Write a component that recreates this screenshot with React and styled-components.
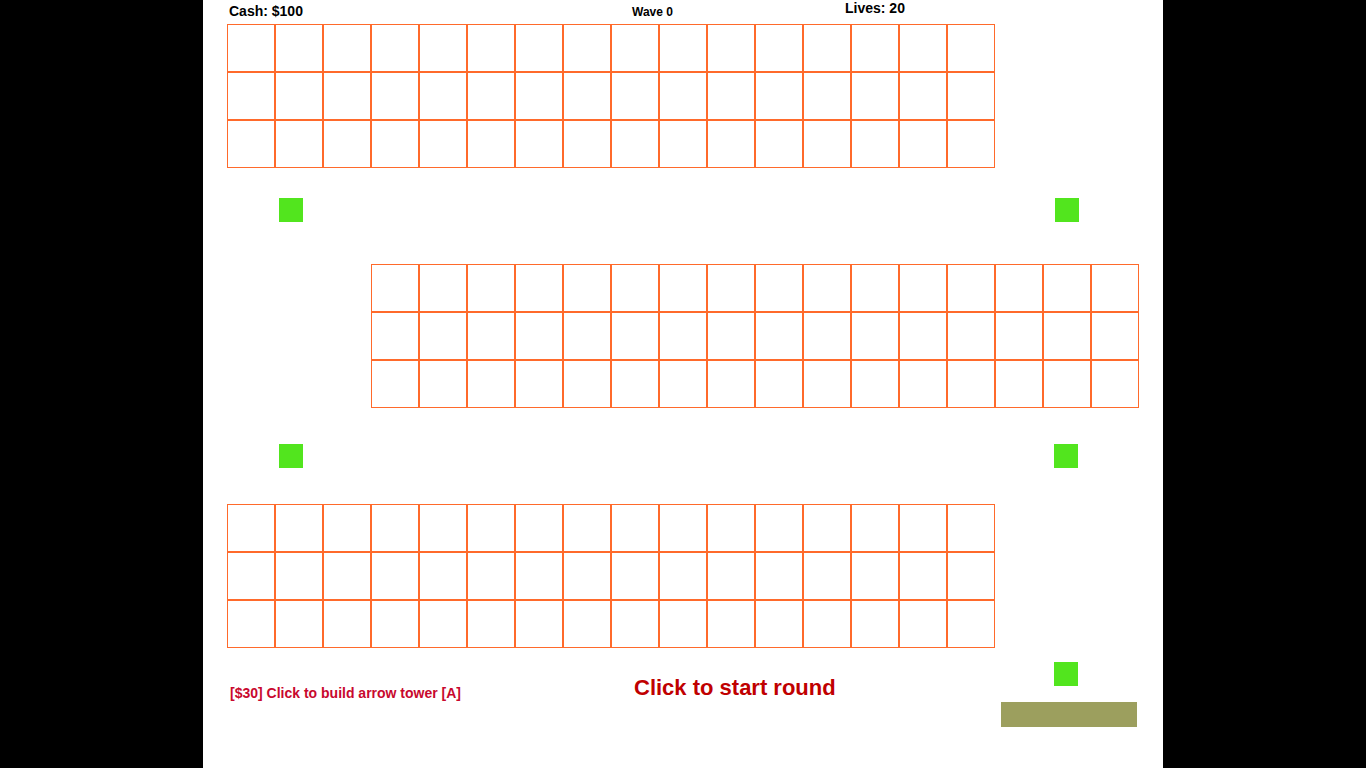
import styled, { createGlobalStyle } from "styled-components";

const GlobalStyle = createGlobalStyle`
  html, body {
    margin: 0;
    padding: 0;
    background: #000;
  }
  body {
    font-family: "Liberation Sans", Arial, sans-serif;
  }
`;

const orange = "#ff6a2b";
const green = "#52e51e";

const Screen = styled.div`
  display: flex;
  justify-content: center;
  min-height: 768px;
  background: #000;
`;

const Board = styled.div`
  position: relative;
  box-sizing: border-box;
  width: 960px;
  height: 768px;
  background: #fff;
  display: flex;
  flex-direction: column;
  overflow: hidden;
`;

const Hud = styled.div`
  display: grid;
  grid-template-columns: 403px 213px auto;
  align-items: start;
  height: 24px;
  padding-left: 26px;
`;

const HudLabel = styled.div`
  margin-top: ${(p) => p.top}px;
  font-size: ${(p) => p.size}px;
  line-height: ${(p) => p.size + 2}px;
  font-weight: bold;
  color: #000;
  white-space: nowrap;
`;

const Lanes = styled.div`
  display: flex;
  flex-direction: column;
  gap: 96px;
`;

const Grid = styled.div`
  display: grid;
  grid-template-columns: repeat(16, 48px);
  grid-auto-rows: 48px;
  margin-left: ${(p) => p.offset}px;
  width: 768px;
`;

const Cell = styled.div`
  box-sizing: border-box;
  border: 1px solid ${orange};
`;

const Footer = styled.div`
  display: grid;
  grid-template-columns: 404px auto;
  align-items: start;
  padding-left: 27px;
`;

const BuildText = styled.div`
  margin-top: 37px;
  font-size: 14px;
  line-height: 16px;
  font-weight: bold;
  color: #c8082e;
  white-space: nowrap;
`;

const StartText = styled.div`
  margin-top: 27px;
  font-size: 22px;
  line-height: 26px;
  font-weight: bold;
  color: #c00000;
  white-space: nowrap;
`;

const Creep = styled.div`
  position: absolute;
  left: ${(p) => p.x}px;
  top: ${(p) => p.y}px;
  width: 24px;
  height: 24px;
  background: ${green};
`;

const HealthBar = styled.div`
  position: absolute;
  left: 798px;
  top: 702px;
  width: 136px;
  height: 25px;
  background: #9c9f5e;
`;

const lanes = [24, 168, 24];
const creeps = [
  { x: 76, y: 198 },
  { x: 852, y: 198 },
  { x: 76, y: 444 },
  { x: 851, y: 444 },
  { x: 851, y: 662 },
];

function Lane({ offset }) {
  return (
    <Grid offset={offset}>
      {Array.from({ length: 48 }, (_, i) => (
        <Cell key={i} />
      ))}
    </Grid>
  );
}

export default function App() {
  return (
    <>
      <GlobalStyle />
      <Screen>
        <Board>
          <Hud>
            <HudLabel size={14} top={3}>
              Cash: $100
            </HudLabel>
            <HudLabel size={12} top={5}>
              Wave 0
            </HudLabel>
            <HudLabel size={14} top={0}>
              Lives: 20
            </HudLabel>
          </Hud>
          <Lanes>
            {lanes.map((offset, i) => (
              <Lane key={i} offset={offset} />
            ))}
          </Lanes>
          <Footer>
            <BuildText>[$30] Click to build arrow tower [A]</BuildText>
            <StartText>Click to start round</StartText>
          </Footer>
          {creeps.map((c, i) => (
            <Creep key={i} x={c.x} y={c.y} />
          ))}
          <HealthBar />
        </Board>
      </Screen>
    </>
  );
}
